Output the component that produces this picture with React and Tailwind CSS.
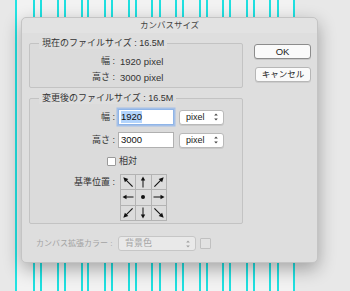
import React from "react";

const LINES = [33, 40, 57, 64, 81, 87, 104, 111, 128, 135, 151, 159, 175, 182, 199, 206, 222, 229, 246, 253, 269, 277, 293];

function Arrows() {
  return (
    <svg width="6" height="10" viewBox="0 0 6 10" className="shrink-0">
      <path d="M1.2 3.6 L3 1.6 L4.8 3.6 Z" fill="currentColor" />
      <path d="M1.2 6.4 L3 8.4 L4.8 6.4 Z" fill="currentColor" />
    </svg>
  );
}

function Select({ value, className = "", disabled = false }) {
  return (
    <div
      className={`flex items-center justify-between h-[15px] rounded-[3px] border pl-[6px] pr-[4px] ${
        disabled
          ? "text-[#a5a5a5] bg-[#e9e9e9] border-[#c6c6c6]"
          : "text-[#222] bg-white border-[#b9b9b9] shadow-[0_1px_0_rgba(0,0,0,0.08)]"
      } ${className}`}
    >
      <span className="text-[9px] leading-none">{value}</span>
      <span className={disabled ? "text-[#a0a0a0]" : "text-[#444]"}>
        <Arrows />
      </span>
    </div>
  );
}

function Arrow({ angle, long }) {
  return (
    <svg width="14" height="14" viewBox="0 0 14 14">
      <g transform={`rotate(${angle} 7 7)`}>
        {long ? (
          <>
            <line x1="0.5" y1="7" x2="10" y2="7" stroke="#111" strokeWidth="1.1" />
            <path d="M9 4.6 L13.6 7 L9 9.4 Z" fill="#111" />
          </>
        ) : (
          <>
            <line x1="1.5" y1="7" x2="9" y2="7" stroke="#111" strokeWidth="1" />
            <path d="M8.5 4.8 L12.5 7 L8.5 9.2 Z" fill="#111" />
          </>
        )}
      </g>
    </svg>
  );
}

const CELLS = [
  { a: 225, l: true },
  { a: 270, l: false },
  { a: 315, l: true },
  { a: 180, l: false },
  null,
  { a: 0, l: false },
  { a: 135, l: true },
  { a: 90, l: false },
  { a: 45, l: true },
];

export default function App() {
  return (
    <div className="relative w-[350px] h-[291px] overflow-hidden bg-[#e8e8e8] font-['Liberation_Sans','Noto_Sans_CJK_JP',sans-serif]">
      {/* canvas background */}
      <div className="absolute left-[17px] top-0 w-[278px] h-full bg-[#f2f2f2]" />
      <div className="absolute left-[15px] top-0 w-[2px] h-full bg-[#22e3e3]" />
      {LINES.map((x) => (
        <div
          key={x}
          className="absolute top-0 h-full w-[1.5px] bg-[#1fe0e0]"
          style={{ left: x }}
        />
      ))}

      {/* dialog */}
      <div className="absolute left-[21px] top-[17px] w-[297px] h-[246px] rounded-[5px] border border-[#c4c4c4] bg-[#dedede] shadow-[0_6px_18px_rgba(0,0,0,0.32)] flex flex-col">
        <div className="h-[15px] flex items-center justify-center text-[8.5px] leading-none text-[#454545] rounded-t-[5px] bg-[#e2e2e2]">
          カンバスサイズ
        </div>

        <div className="flex pl-[7px] pt-[10px]">
          <div className="w-[214px] flex flex-col">
            {/* group 1 */}
            <div className="relative h-[45px] border border-[#c3c3c3] bg-[#dbdbdb] rounded-[2px]">
              <div className="absolute left-[9px] top-[-6px] px-[3px] bg-[#dedede] text-[9px] leading-[11px] text-[#333]">
                現在のファイルサイズ : 16.5M
              </div>
              <div className="grid grid-cols-[85px_1fr] gap-x-[5px] gap-y-[5px] pt-[12px] text-[9px] leading-[11px] text-[#333]">
                <div className="text-right">幅 :</div>
                <div className="text-[9.5px]">1920 pixel</div>
                <div className="text-right">高さ :</div>
                <div className="text-[9.5px]">3000 pixel</div>
              </div>
            </div>

            {/* group 2 */}
            <div className="relative mt-[10px] h-[126px] border border-[#c3c3c3] bg-[#dbdbdb] rounded-[2px]">
              <div className="absolute left-[9px] top-[-6px] px-[3px] bg-[#dedede] text-[9px] leading-[11px] text-[#333]">
                変更後のファイルサイズ : 16.5M
              </div>
              <div className="grid grid-cols-[85px_1fr] gap-x-[3px] pt-[10px] text-[9px] text-[#333]">
                <div className="text-right leading-[16px]">幅 :</div>
                <div className="flex items-center gap-[5px]">
                  <div className="w-[56px] h-[16px] bg-white border border-[#8fb5e8] shadow-[0_0_0_1.5px_rgba(120,170,240,0.55)] flex items-center pl-[2px]">
                    <span className="bg-[#b3d4fc] text-[9.5px] leading-[12px] text-[#111]">1920</span>
                  </div>
                  <Select value="pixel" className="w-[45px]" />
                </div>

                <div className="text-right leading-[16px] mt-[7px]">高さ :</div>
                <div className="flex items-center gap-[5px] mt-[7px]">
                  <div className="w-[56px] h-[16px] bg-white border border-[#b0b0b0] flex items-center pl-[2px]">
                    <span className="text-[9.5px] leading-[12px] text-[#111]">3000</span>
                  </div>
                  <Select value="pixel" className="w-[45px]" />
                </div>

                <div className="col-span-2 flex items-center gap-[3px] mt-[8px] pl-[77px]">
                  <div className="w-[9px] h-[9px] bg-white border border-[#9a9a9a] rounded-[1px]" />
                  <span className="leading-[11px]">相対</span>
                </div>

                <div className="text-right leading-[16px] mt-[7px]">基準位置 :</div>
                <div className="mt-[7px] pl-[2px]">
                  <div className="w-[47px] h-[47px] grid grid-cols-3 grid-rows-3 gap-px p-px bg-[#b3b3b3]">
                    {CELLS.map((c, i) => (
                      <div key={i} className="bg-[#dcdcdc] flex items-center justify-center">
                        {c ? (
                          <Arrow angle={c.a} long={c.l} />
                        ) : (
                          <div className="w-[4px] h-[4px] rounded-full bg-[#111]" />
                        )}
                      </div>
                    ))}
                  </div>
                </div>
              </div>
            </div>
          </div>

          {/* buttons */}
          <div className="ml-[11px] flex flex-col gap-[8px] pt-[1px]">
            <div className="w-[57px] h-[15px] rounded-[3px] border border-[#8c8c8c] bg-[#fafafa] flex items-center justify-center text-[9.5px] text-[#222] leading-none shadow-[0_1px_0_rgba(0,0,0,0.1)]">
              OK
            </div>
            <div className="w-[56px] h-[15px] ml-[1px] rounded-[3px] border border-[#b6b6b6] bg-[#fafafa] flex items-center justify-center text-[8.5px] text-[#222] leading-none shadow-[0_1px_0_rgba(0,0,0,0.08)]">
              キャンセル
            </div>
          </div>
        </div>

        {/* bottom row */}
        <div className="flex items-center mt-[12px] pl-[14px]">
          <span className="text-[8px] text-[#a3a3a3] leading-none w-[82px] whitespace-nowrap">カンバス拡張カラー :</span>
          <Select value="背景色" disabled className="w-[78px]" />
          <div className="ml-[4px] w-[11px] h-[11px] border border-[#c0c0c0] bg-[#e2e2e2] rounded-[1px]" />
        </div>
      </div>
    </div>
  );
}
